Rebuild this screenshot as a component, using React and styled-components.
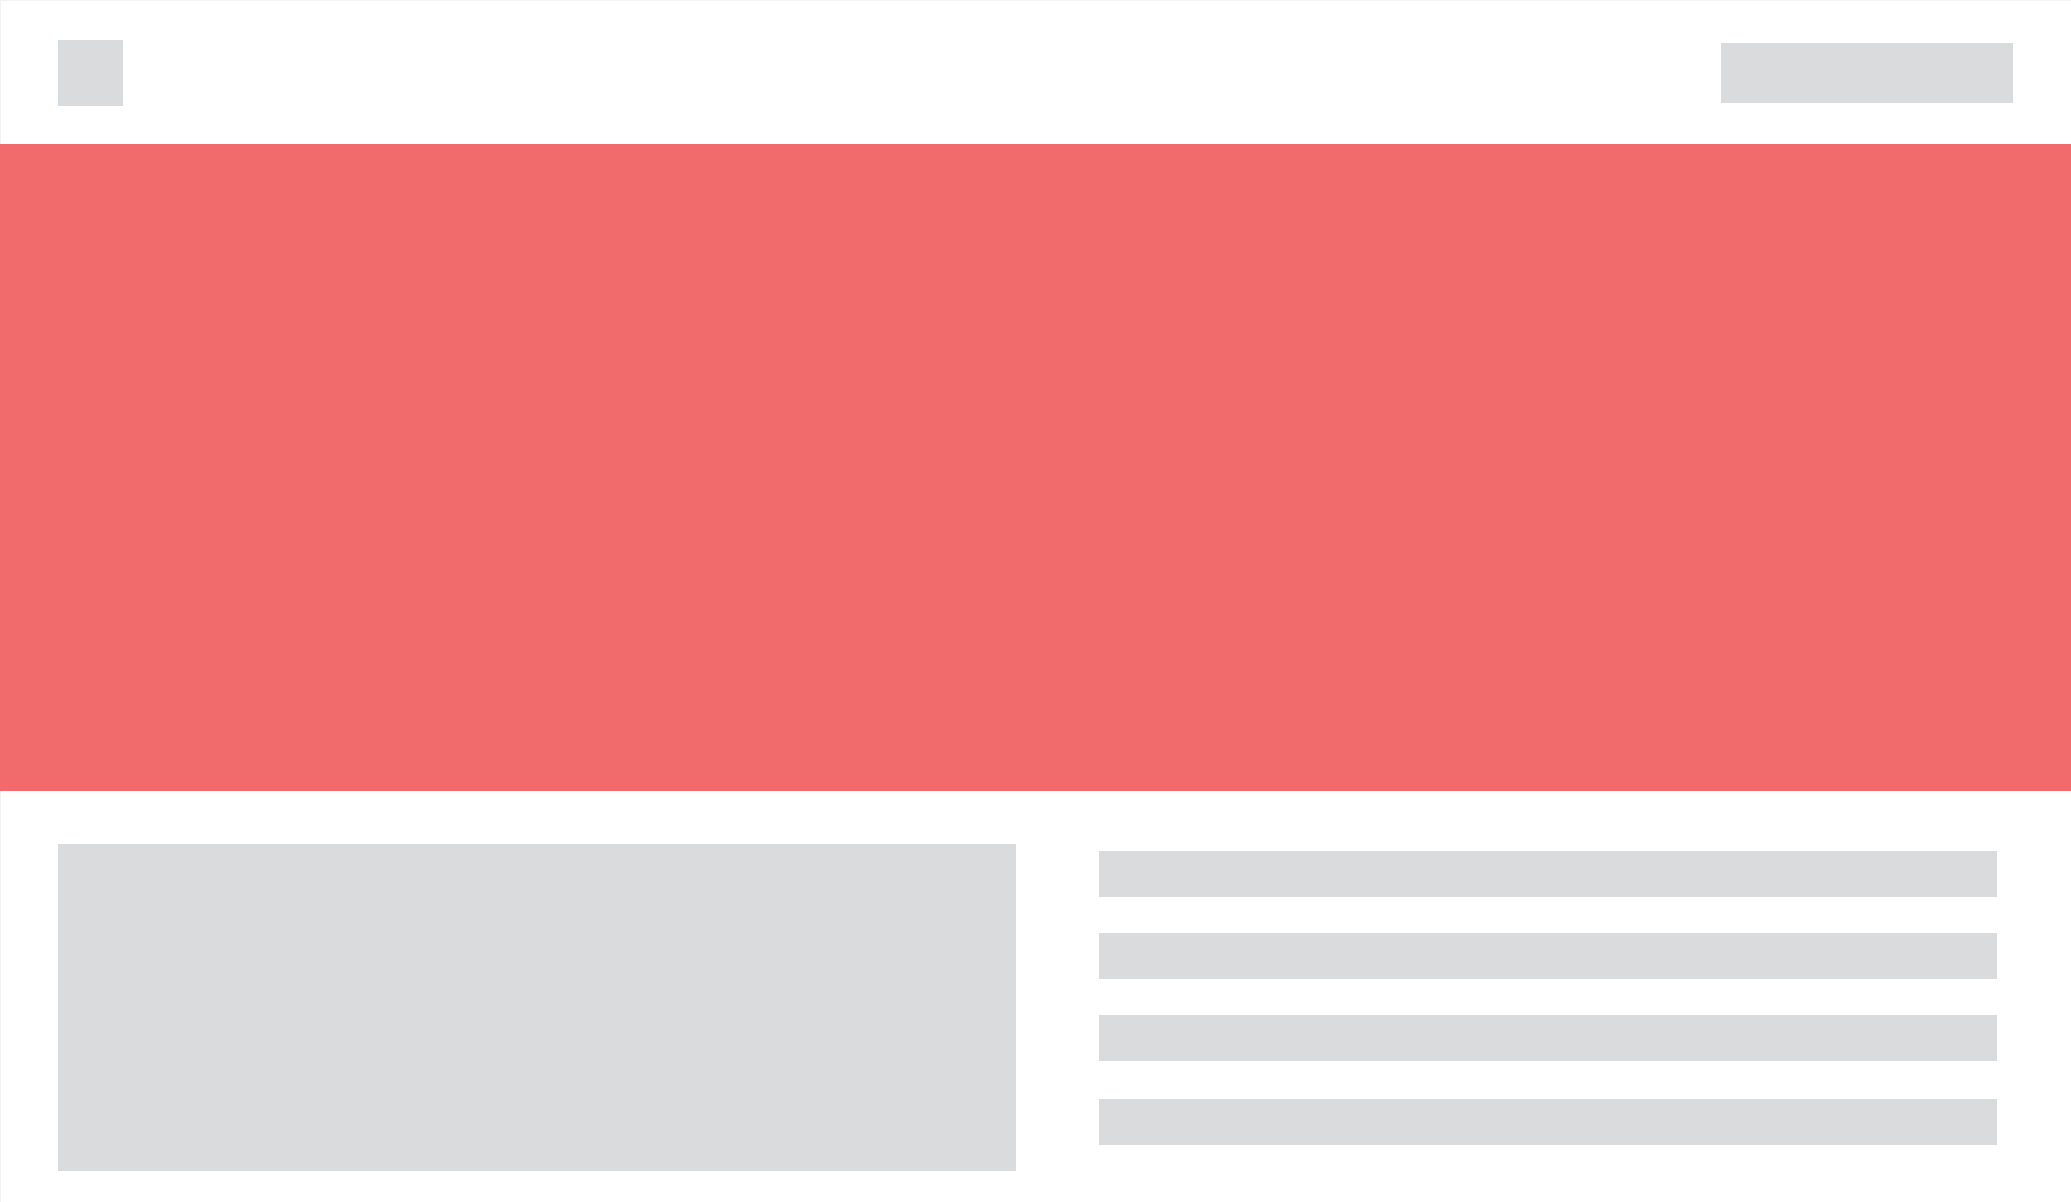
import React from "react";
import styled, { createGlobalStyle } from "styled-components";

const GlobalStyle = createGlobalStyle`
  html, body { margin: 0; padding: 0; background: #ffffff; }
  body { font-family: "Liberation Sans", Arial, sans-serif; }
`;

const Page = styled.div`
  width: 2071px;
  height: 1202px;
  box-sizing: border-box;
  border-top: 1px solid #f3f3f3;
  display: flex;
  flex-direction: column;
  overflow: hidden;
`;

const Header = styled.header`
  height: 143px;
  box-sizing: border-box;
  border-left: 1px solid #f3f3f3;
  padding: 0 58px 0 57px;
  display: flex;
  align-items: center;
  justify-content: space-between;
`;

const Placeholder = styled.div`
  background: #dadbdd;
  width: ${(p) => p.$w}px;
  height: ${(p) => p.$h}px;
  flex: none;
`;

const Hero = styled.section`
  height: 647px;
  background: #f26b6c;
  flex: none;
`;

const Content = styled.main`
  flex: 1;
  display: grid;
  grid-template-columns: 958px 898px;
  column-gap: 83px;
  box-sizing: border-box;
  border-left: 1px solid #f3f3f3;
  padding: 53px 74px 0 57px;
  align-items: start;
`;

const BarList = styled.div`
  display: flex;
  flex-direction: column;
  gap: 36px;
  padding-top: 7px;

  & > :last-child {
    margin-top: 2px;
  }
`;

export default function App() {
  return (
    <>
      <GlobalStyle />
      <Page>
        <Header>
          <Placeholder $w={65} $h={66} />
          <Placeholder $w={292} $h={60} />
        </Header>
        <Hero />
        <Content>
          <Placeholder $w={958} $h={327} />
          <BarList>
            {[0, 1, 2, 3].map((i) => (
              <Placeholder key={i} $w={898} $h={46} />
            ))}
          </BarList>
        </Content>
      </Page>
    </>
  );
}
